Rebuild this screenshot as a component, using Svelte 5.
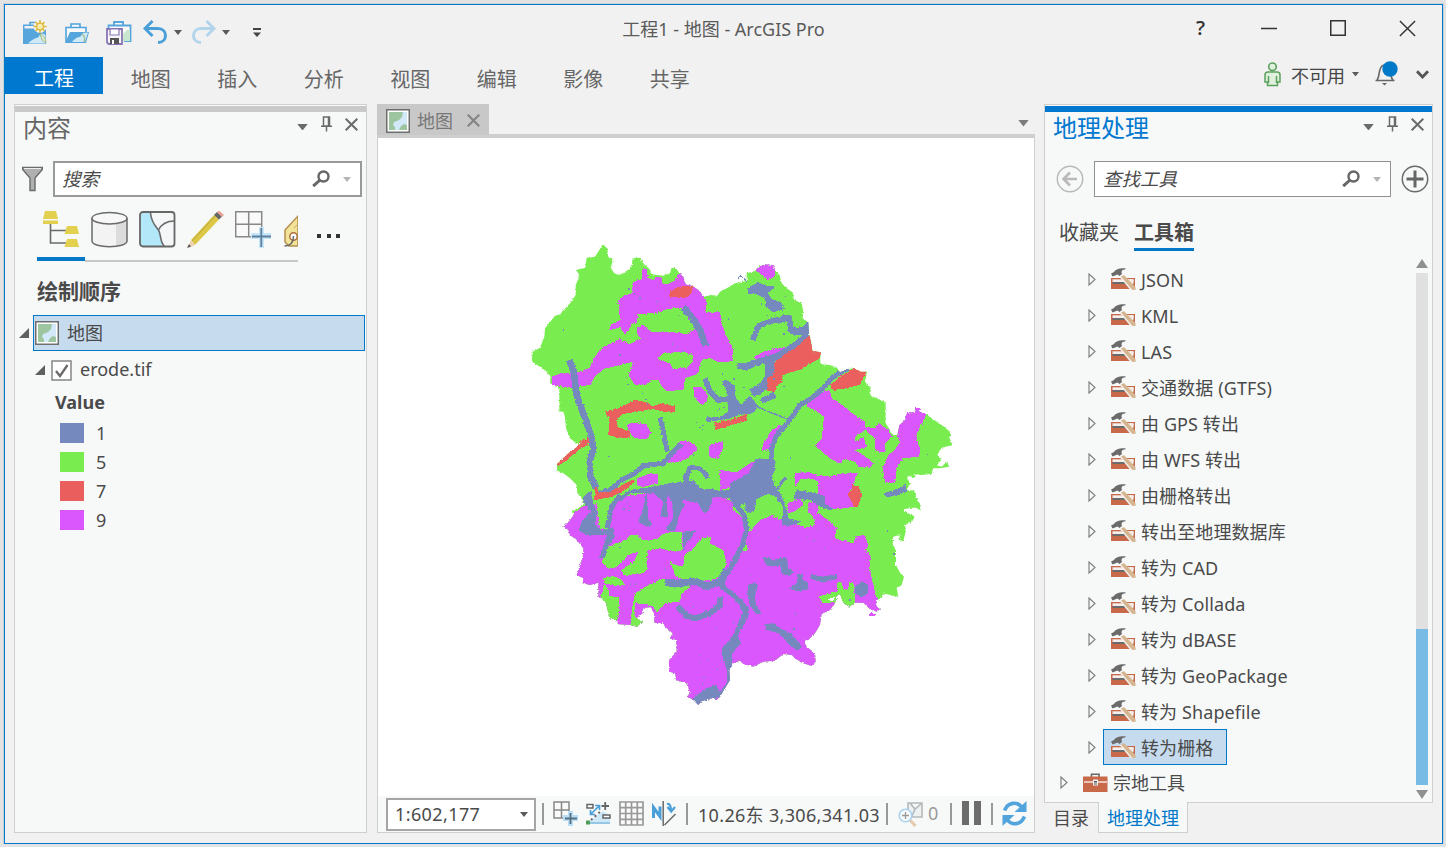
<script>
  const ribbon = ['地图', '插入', '分析', '视图', '编辑', '影像', '共享'];
  const legend = [
    ['1', '#7689bf'],
    ['5', '#79ec50'],
    ['7', '#eb5e5e'],
    ['9', '#da57fd']
  ];
  const tools = [
    'JSON', 'KML', 'LAS', '交通数据 (GTFS)', '由 GPS 转出', '由 WFS 转出', '由栅格转出',
    '转出至地理数据库', '转为 CAD', '转为 Collada', '转为 dBASE', '转为 GeoPackage',
    '转为 Shapefile', '转为栅格'
  ];

  // Study-area outline, in thirds of a pixel
  const outline =
    '248,28 262,40 265,65 280,72 272,98 283,115 300,119 320,108 335,95 338,70 362,68 366,80 390,105 395,118 430,122 450,115 455,98 468,100 478,115 490,125 497,148 518,153 535,165 552,185 570,180 592,182 600,170 620,160 645,145 680,138 680,115 705,108 715,95 735,88 758,90 766,108 778,118 785,145 800,160 818,172 822,195 845,205 850,230 848,250 865,262 868,300 873,318 878,348 903,352 900,375 905,388 930,390 952,400 960,412 980,402 1005,400 1022,410 1042,410 1035,435 1040,450 1052,455 1052,482 1075,492 1097,502 1097,565 1110,585 1118,600 1132,600 1138,570 1155,555 1160,535 1185,530 1188,522 1200,530 1220,538 1250,560 1272,575 1290,590 1290,615 1298,630 1265,638 1252,660 1265,672 1252,690 1265,695 1280,680 1288,695 1260,700 1240,700 1235,717 1205,720 1180,717 1190,728 1160,722 1170,747 1160,765 1182,767 1190,790 1202,810 1200,825 1185,817 1150,823 1165,835 1183,843 1178,857 1155,870 1158,887 1150,917 1140,920 1138,900 1120,905 1118,927 1128,945 1128,990 1140,1013 1152,1025 1145,1050 1130,1060 1135,1085 1110,1080 1090,1075 1085,1090 1070,1095 1068,1110 1080,1123 1070,1130 1050,1123 1030,1103 1005,1103 988,1115 970,1103 960,1077 950,1083 945,1105 930,1125 905,1137 900,1170 885,1195 865,1215 852,1217 860,1235 885,1255 887,1280 875,1293 845,1283 825,1270 815,1260 790,1257 765,1277 730,1280 700,1295 670,1287 660,1277 640,1285 628,1305 630,1335 615,1360 600,1385 590,1395 580,1388 560,1395 545,1398 535,1410 520,1395 503,1385 510,1370 498,1345 468,1335 465,1315 447,1310 447,1275 470,1250 468,1215 450,1210 458,1195 435,1175 430,1165 403,1163 402,1135 393,1117 370,1119 368,1135 350,1150 368,1160 350,1175 330,1170 295,1168 288,1155 268,1150 258,1105 245,1090 235,1085 235,1043 210,1050 188,1045 190,1030 170,1020 178,995 188,970 190,940 170,915 150,900 145,885 130,875 150,855 165,835 155,830 190,810 185,790 172,775 170,750 150,730 130,715 112,707 110,688 145,655 172,635 188,618 172,628 150,610 138,580 133,530 118,530 118,460 90,445 92,425 75,405 60,395 35,380 38,350 60,338 73,305 75,280 105,242 120,238 150,205 167,180 167,150 180,122 168,105 195,98 200,68 225,65 238,45';

  // [x offset, y offset, points]
  const magenta = [
    [0, 0, '365,102 380,102 385,130 400,135 412,125 425,130 428,148 455,145 470,130 478,110 500,110 540,165 555,190 560,205 558,230 600,230 605,265 620,305 638,340 638,378 600,383 570,370 550,372 540,385 535,415 495,430 490,465 440,468 425,455 415,435 395,435 375,450 345,450 325,420 340,380 300,390 250,402 225,425 210,450 150,458 95,450 95,425 130,413 175,412 210,398 220,370 250,335 300,312 330,328 362,310 350,295 350,278 370,270 395,292 450,290 505,298 525,280 505,250 485,218 440,222 420,232 355,238 350,262 335,265 325,285 315,298 300,278 268,285 270,270 300,255 295,200 310,183 335,175 340,140 365,132'],
    [0, 0, '520,455 545,455 565,485 560,500 542,508 522,485'],
    [0, 0, '320,570 335,563 380,567 393,595 380,612 345,610 335,600'],
    [0, 0, '445,660 480,618 510,620 535,640 520,655 490,678 445,683'],
    [0, 0, '568,630 610,618 610,640 595,668 568,670'],
    [0, 0, '600,705 650,712 690,685 720,672 725,685 690,740 650,755 600,765'],
    [660, 0, '45,105 60,95 85,80 110,95 103,125 85,135 60,115'],
    [660, 0, '45,365 70,350 110,340 135,337 120,365 80,372 45,375'],
    [660, 0, '200,505 250,470 270,465 275,490 300,505 345,540 375,560 375,575 405,580 415,565 445,585 455,605 435,625 437,652 405,648 405,610 375,585 345,605 345,620 370,605 375,625 385,635 345,645 370,660 400,685 390,698 355,695 345,680 315,672 300,685 270,670 225,632 245,610 252,545 225,525 200,515'],
    [660, 0, '470,600 478,570 495,555 500,520 540,515 560,540 535,585 530,610 540,640 538,665 490,670 470,695 465,745 435,740 428,700 445,660 465,645 480,620'],
    [660, 0, '70,625 95,585 120,570 125,575 105,605 90,640 65,648'],
    [0, 705, '350,25 390,10 415,12 415,40 370,52 350,45'],
    [660, 705, '165,10 200,5 235,15 270,20 300,12 355,8 345,25 340,50 325,70 345,110 290,118 255,110 235,70 235,35 220,28 180,28 165,50'],
    [660, 705, '145,100 180,85 190,105 160,125 145,130'],
    [660, 705, '205,95 232,100 235,130 225,150 205,125'],
    [0, 705, '90,185 190,108 230,100 240,175 265,185 275,125 300,80 380,70 480,65 540,85 600,80 640,95 690,185 720,150 755,138 790,150 820,160 860,172 885,165 870,140 865,95 895,95 895,130 930,155 950,175 945,205 1000,220 1010,198 1032,195 1045,225 1038,240 1053,260 1048,295 1060,345 1068,380 1110,440 900,720 400,720 230,470 160,350']
  ];
  const green = [
    [0, 0, '412,370 430,355 490,350 518,360 518,380 500,398 460,402 450,385 420,375'],
    [0, 705, '250,265 262,230 320,210 330,195 350,195 370,210 410,208 435,188 485,185 485,242 455,243 420,235 385,240 380,275 382,300 360,312 310,315 305,300 345,270 355,245 325,255 305,275 290,292 262,295 245,275'],
    [0, 705, '450,272 465,285 490,290 492,255 515,240 545,205 575,200 568,220 610,240 620,280 605,315 575,330 500,332 465,318'],
    [0, 705, '250,325 280,317 305,330 315,345 290,348 252,340'],
    [0, 705, '240,390 252,345 265,355 268,378 298,382 295,445 288,455 260,450'],
    [0, 705, '333,475 335,420 345,370 385,345 430,325 450,345 512,350 485,370 480,395 435,400 410,428 395,405 345,400 345,440 370,455 350,475'],
    [660, 705, '235,380 290,365 292,335 305,340 312,360 325,355 328,337 342,340 345,398 328,415 300,405 285,400 250,398'],
    [660, 705, '-20,90 20,75 35,90 30,115 45,120 50,80 95,75 125,105 125,145 95,138 60,150 30,180 18,170 5,140 -20,120'],
    [660, 705, '160,125 190,105 205,125 225,150 220,165 195,170 170,155'],
    [0, 705, '665,240 678,212 682,245'],
    [0, 705, '540,20 560,30 600,0 600,55 560,55 520,45']
  ];
  const blue = [
    [0, 705, '290,85 330,60 400,50 450,40 495,35 520,30 540,55 600,60 655,57 690,40 690,95 640,110 630,85 580,80 565,125 550,130 535,100 490,90 475,135 465,185 435,180 460,145 455,95 440,67 440,110 445,140 420,142 430,95 400,70 380,72 385,145 400,165 380,170 355,155 370,115 378,70 330,70 300,95'],
    [0, 705, '215,60 220,100 232,130 225,165 245,180 280,172 285,200 265,230 255,265 235,265 250,230 262,195 200,195 175,180 185,155 212,125 190,95 190,80'],
    [660, 705, '-30,40 25,10 45,-30 60,-35 105,-30 105,0 95,20 105,50 125,75 140,120 145,145 185,155 150,168 125,165 130,110 105,80 85,72 50,85 45,120 30,130 15,120 15,90 -30,90'],
    [660, 0, '25,160 55,140 70,150 105,155 85,175 95,195 120,198 135,222 100,232 80,220 75,190 50,178 25,178'],
    [660, 0, '120,242 155,240 160,275 190,275 200,260 215,265 206,298 160,300 145,290 140,262'],
    [660, 0, '0,515 30,480 40,495 57,515 35,535 0,540'],
    [0, 0, '605,440 620,435 645,455 645,485 668,515 690,500 690,530 660,540 630,550 560,562 558,545 600,545 625,530 625,480'],
    [660, 705, '160,85 170,60 220,68 255,78 258,105 280,115 275,122 240,110 215,92'],
    [660, 705, '432,70 480,53 495,42 502,65 470,77 435,82'],
    [660, 705, '68,262 85,262 100,270 125,263 140,262 145,295 160,305 150,318 125,312 122,287 80,287'],
    [660, 705, '212,312 250,320 292,313 292,327 250,337 212,327'],
    [660, 705, '170,312 190,312 190,332 205,337 205,360 165,363 148,355 170,340'],
    [660, 705, '345,350 365,332 385,345 385,370 365,382 345,370'],
    [660, 705, '25,345 40,337 55,345 44,375 50,408 65,430 50,432 30,410 22,370'],
    [660, 705, '75,465 100,458 122,475 152,490 187,530 175,542 150,527 120,492 80,480'],
    [0, 705, '655,500 662,520 637,550 637,590 620,597 605,555 608,530 630,508'],
    [0, 705, '530,675 560,655 590,645 600,670 585,690 545,698 535,708 515,690'],
    [0, 705, '488,185 525,182 515,205 500,215 490,240']
  ];
  // [width, x offset, y offset, points]
  const rivers = [
    [20, 0, 0, '148,375 162,415 170,480 195,550 212,600 220,640 210,680 210,720 228,760'],
    [15, 0, 0, '235,775 270,765 305,735 345,715 370,692 430,685 450,660 485,627'],
    [15, 0, 0, '420,548 430,590 442,650'],
    [15, 0, 705, '300,75 275,110 262,175'],
    [20, 0, 0, '490,218 515,245 540,285 557,332'],
    [14, 0, 0, '500,725 510,697 540,700 560,722 563,730'],
    [18, 0, 0, '500,715 497,755'],
    [16, 0, 0, '555,430 570,470 595,495 640,490'],
    [15, 660, 0, '325,400 280,425 250,460 215,490 180,510 150,555 110,600 95,640 95,690'],
    [4, 660, 0, '0,510 50,515 110,540 150,555'],
    [17, 660, 0, '38,315 55,275 90,258 120,255 145,250'],
    [20, 660, 0, '205,300 160,335 110,365 50,382 20,394 -10,393'],
    [28, 660, 0, '90,370 88,430 70,455 35,475'],
    [18, 660, 0, '65,498 105,480'],
    [15, 0, 705, '640,95 672,135 680,180 665,230 635,290 610,325 605,350 640,375 680,415 650,490 620,540 630,595 628,640 595,685'],
    [22, 0, 705, '435,338 470,340 530,335 560,350 600,335 620,300'],
    [18, 0, 705, '472,408 500,438 525,445 570,430 600,405 600,380'],
    [16, 660, 705, '0,390 18,430 0,475'],
    [9, 660, 705, '110,60 130,30 140,25'],
    [14, 0, 705, '460,175 470,135 490,100']
  ];
  const red = [
    [0, 0, '450,170 475,155 520,153 515,175 498,188 447,187'],
    [0, 0, '252,530 300,518 345,494 380,503 400,513 430,505 466,515 466,532 430,530 400,522 350,530 305,538 290,555 290,575 330,590 330,608 300,610 265,600 268,550'],
    [0, 0, '582,563 625,556 680,538 680,557 640,569 585,585'],
    [0, 0, '108,686 145,650 190,612 207,610 205,630 180,642 150,667 115,694'],
    [0, 705, '228,48 235,65 270,65 340,28 345,35 315,60 270,82 222,90'],
    [660, 0, '210,297 213,318 218,348 245,350 238,372 210,385 190,400 130,420 125,440 108,455 105,470 82,468 80,430 100,420 103,385 130,360 165,340 195,315'],
    [660, 0, '272,450 300,425 345,398 385,405 358,450 310,462 272,465'],
    [660, 705, '322,72 335,60 335,46 355,48 367,75 354,112 342,112 330,85']
  ];
  // Single-cell speckles of class 1
  const specks = [
    [128,283],[342,175],[358,187],[325,160],[410,199],[474,240],[298,358],[318,425],[322,447],[366,474],[376,492],[380,505],[455,325],[470,335],[487,347],[623,250],[575,297],[606,415],[640,430],[596,520],[610,515],[590,525],[545,582],[538,575],[547,570],[528,560],[722,205],[740,240],[765,240],[790,295],[795,182],[760,430],[670,455],[790,452],[810,667],[1220,657],[1112,680],[890,882],[860,905],[880,915],[912,938],[775,905],[825,1135],[820,1180],[750,1265],[690,1020],[1100,886],[1120,955],[988,1093],[540,1280],[560,1275],[590,1300],[550,1325],[545,1345],[585,1175],[640,1160],[517,1113],[298,935],[320,800],[328,812],[310,820],[325,825],[345,1045],[330,1045],[265,663],[518,658],[435,1000],[540,1260],[600,1275]
  ];
</script>

{#snippet caret(c = '#5a5a5a', w = 8)}
  <svg width={w} height={w / 2 + 1} viewBox="0 0 8 5"><path d="M0 0h8L4 5z" fill={c} /></svg>
{/snippet}
{#snippet cross(s = 13, w = 2, c = '#6a6a6a')}
  <svg width={s} height={s} viewBox="0 0 13 13"><path d="M.7.7l11.6 11.6M12.3.7L.7 12.3" stroke={c} stroke-width={w} /></svg>
{/snippet}
{#snippet pin()}
  <svg width="11" height="16" viewBox="0 0 11 16"><path d="M2.500 1h6v9h-6zM0 10.200h11M5.500 10v5.500M7.500 1v9" fill="none" stroke="#6a6a6a" stroke-width="1.500" /></svg>
{/snippet}
{#snippet lens()}
  <svg width="18" height="18" viewBox="0 0 18 18"><circle cx="11.500" cy="6.500" r="5" fill="none" stroke="#666" stroke-width="2.400" /><path d="M8 10L1.200 16.200" stroke="#666" stroke-width="3" /></svg>
{/snippet}
{#snippet mapIcon()}
  <svg width="24" height="24" viewBox="0 0 24 24"><rect x=".75" y=".75" width="22.500" height="22.500" fill="#fff" stroke="#6e6e6e" stroke-width="1.500" /><path d="M3 3h18v18H3z" fill="#9cc5a0" /><path d="M17 3h4v13l-3-1-3 2-2 4H9v-3l-2-2 1-3 3-1 2-1 3-3z" fill="#d3e8f8" /></svg>
{/snippet}
{#snippet toolset()}
  <svg width="25" height="23" viewBox="0 0 25 23"><path d="M0 10h24v11H0z" fill="#c8694a" /><path d="M1.500 11.300h21v2.700h-21z" fill="#f4efec" /><path d="M1.500 14h21v2h-21z" fill="#6b6b6b" /><path d="M16 11.300h6.500v4.700H18z" fill="#f4efec" /><path d="M8.500 9h3L23 21.500h-4z" fill="#f4efec" /><path d="M10 8.500l3-1.500L24.500 19v3h-3z" fill="#d6b690" /><path d="M0 5.500l3-1.500C5 1.200 8 0 14.500.3v1c-3.200.4-4 1.500-4 3.200l.5 1.500-2.500 2L6.500 6.500 1.500 8.500z" fill="#6b6b6b" /></svg>
{/snippet}
{#snippet expander()}
  <svg width="8" height="13" viewBox="0 0 8 13"><path d="M1 1v11l6-5.500z" fill="none" stroke="#808080" stroke-width="1.200" /></svg>
{/snippet}
{#snippet opened()}
  <svg width="10" height="10" viewBox="0 0 10 10"><path d="M10 0v10H0z" fill="#5f5f5f" /></svg>
{/snippet}
{#snippet shapes(list, fill)}
  {#each list as [x, y, points]}
    <polygon {points} {fill} transform="translate({x} {y})" />
  {/each}
{/snippet}

<div class="window">
  <header class="title">
    <div class="quick">
      <svg width="26" height="26" viewBox="0 0 26 26"><path d="M8 5V2.500h7V5" fill="none" stroke="#4fa3dc" stroke-width="1.500" /><path d="M1 4.500h23V24H1z" fill="#56a5dc" /><path d="M2.500 6h10v2.500h-10z" fill="#f1f1f1" /><path d="M6 23.500q5-5 10-6l3-4q4 0 4.500 2v8z" fill="#cfe9f7" /><path d="M18 14q6 2 6 9l-4-3z" fill="#d9e9c8" stroke="#a3bd96" /><circle cx="18" cy="6.500" r="6.500" fill="#f3f3ef" /><path d="M18 0v13M11.500 6.500h13M13.500 2l9 9M22.500 2l-9 9" stroke="#dcb83c" stroke-width="1.600" /><circle cx="18" cy="6.500" r="3.400" fill="#f7edb0" stroke="#dcb83c" stroke-width="1.300" /></svg>
      <svg width="26" height="26" viewBox="0 0 26 26"><path d="M7 7V4h9v3M2 22V7.500h20V12" fill="#fafafa" stroke="#4fa3dc" stroke-width="1.600" /><path d="M1 23l5-11h19l-3 11z" fill="#56a5dc" /><path d="M8 22q4-5 8-5l3-4 5-.5-3 9.500z" fill="#cfe9f7" /><path d="M18 14q4 3 2 8" fill="none" stroke="#a3bd96" stroke-width="1.500" /></svg>
      <svg width="26" height="26" viewBox="0 0 26 26"><path d="M8 5V2h9v3M2.500 10V5.500h22V21H18" fill="#fafafa" stroke="#56a5dc" stroke-width="1.800" /><path d="M17 21V14l4-4h3v11z" fill="#c9e6cf" /><path d="M1 9h15v15H2.500L1 22.500z" fill="#f7f7fa" stroke="#8a76b5" stroke-width="1.800" /><path d="M4 9h9v6H4z" fill="#fff" stroke="#8a76b5" stroke-width="1.200" /><path d="M4 18h9v6H4z" fill="#555" /><path d="M6 20h2v4H6z" fill="#fff" /></svg>
      <svg class="undo" width="25" height="25" viewBox="0 0 25 25"><path d="M2 8.500h13c10 0 10 14 0 14M9.500 1L2 8.500 9.500 16" fill="none" stroke="#4a9fd9" stroke-width="3" /></svg>
      {@render caret()}
      <svg class="redo" width="25" height="25" viewBox="0 0 25 25"><path d="M23 8.500H10c-10 0-10 14 0 14M15.500 1L23 8.500 15.500 16" fill="none" stroke="#b3d5ec" stroke-width="3" /></svg>
      {@render caret()}
      <svg class="custom" width="8" height="10" viewBox="0 0 8 10"><path d="M0 0h8v2H0zM0 4.500h8L4 9z" fill="#444" /></svg>
    </div>
    <div class="caption">工程1 - 地图 - ArcGIS Pro</div>
    <div class="sys">
      <b>?</b>
      <svg width="16" height="16"><path d="M0 8.500h16" stroke="#333" stroke-width="1.500" /></svg>
      <svg width="16" height="16"><path d="M.75.75h14.500v14.500H.75z" fill="none" stroke="#333" stroke-width="1.500" /></svg>
      {@render cross(17, 1.1, '#333')}
    </div>
  </header>

  <nav class="ribbon">
    <div class="file">工程</div>
    {#each ribbon as t}<div class="rtab">{t}</div>{/each}
    <div class="account">
      <svg width="17" height="25" viewBox="0 0 17 25"><circle cx="8.500" cy="4.800" r="3.800" fill="#dff0dc" stroke="#5ba05c" stroke-width="1.600" /><path d="M4 10h9q3 0 3 3v7h-2.500v3.500h-10V20H1v-7q0-3 3-3zM4.500 14v7M12.500 14v7" fill="#dff0dc" stroke="#5ba05c" stroke-width="1.500" /></svg>
      <span>不可用</span>
      {@render caret('#5a5a5a', 7)}
      <svg class="bell" width="25" height="25" viewBox="0 0 25 25"><path d="M1.500 19.500h19M3 19c3-3 1-10 5-14 1-1 2-1 3-1M19 19c-2-2-1.500-3-2-5" fill="none" stroke="#666" stroke-width="1.600" /><path d="M8 22h5l-2.500 2.500z" fill="#666" /><circle cx="16" cy="8" r="7.700" fill="#0079c8" /></svg>
      <svg width="13" height="9" viewBox="0 0 13 9"><path d="M1 1.200L6.500 7 12 1.200" fill="none" stroke="#555" stroke-width="2.800" /></svg>
    </div>
  </nav>

  <main class="dock">
    <section class="panel contents">
      <div class="strip"></div>
      <div class="phead"><h2>内容</h2>{@render caret('#6a6a6a', 11)}{@render pin()}{@render cross()}</div>
      <div class="searchrow">
        <svg width="21" height="26" viewBox="0 0 21 26"><path d="M.7 1.500h19.600v2L13 12v12.500H8V12L.7 3.500z" fill="#b0b0b0" stroke="#6a6a6a" stroke-width="1.400" /><path d="M2 2.500h17" stroke="#eee" /></svg>
        <div class="search"><i>搜索</i>{@render lens()}{@render caret('#b5b5b5')}</div>
      </div>
      <div class="views">
        <svg width="37" height="37" viewBox="0 0 37 37"><path d="M7.500 12v20h16M7.500 19.500h16" fill="none" stroke="#6a6a6a" stroke-width="1.600" /><path d="M2 0h11l2 8H0zM0 9.500h15V13H0zM24 15h10l2 8H21.500zM24 28h10l2 8H21.500z" fill="#e3d04e" /></svg>
        <svg width="37" height="37" viewBox="0 0 37 37"><path d="M1 7v23c0 8 35 8 35 0V7" fill="#f3f3f3" /><path d="M25 12l11-5v23q-2 4-11 5z" fill="#dcdcdc" /><path d="M1 7v23c0 7.500 35 7.500 35 0V7" fill="none" stroke="#6a6a6a" stroke-width="1.500" /><ellipse cx="18.500" cy="7.200" rx="17.500" ry="5.800" fill="#f7f7f7" stroke="#6a6a6a" stroke-width="1.500" /></svg>
        <svg width="37" height="37" viewBox="0 0 37 37"><rect x="1" y="1" width="34.500" height="34.500" rx="3" fill="#f5f6f7" /><path d="M1.500 1.500h10c1 10 5 13 8 17 3 5 1 12 6 17h-24z" fill="#b3e8f8" /><path d="M11.500 2c1 10 5 13 8 17 3 5 1 12 6 16.500M19.500 19c3-6 9-9 16-9" fill="none" stroke="#6a6a6a" stroke-width="1.600" /><rect x="1" y="1" width="34.500" height="34.500" rx="3" fill="none" stroke="#666" stroke-width="1.800" /></svg>
        <svg width="37" height="37" viewBox="0 0 37 37"><path d="M4 29L27 4l5 4.500L8 34z" fill="#dcc846" /><path d="M5 30L28 5" stroke="#b7a543" stroke-width="1" /><path d="M4 29l4 5-7 3z" fill="#efcfae" /><path d="M2 33l2 2.500L0 37z" fill="#555" /><path d="M27 4l3-3 5 4.500-3 3z" fill="#666" /><path d="M30 1l2-1.500 5 4.500-2 2z" fill="#e8a396" /></svg>
        <svg width="37" height="37" viewBox="0 0 37 37"><path d="M.7.700h26v25H.7zM13.700 1v25M.7 13.200h26" fill="#fafafa" stroke="#888" stroke-width="1.500" /><path d="M16 22h8v-6h5v6h7v6h-7v9h-5v-9h-8z" fill="#c6e6fa" /><path d="M26.300 17v19M17 25.500h19" stroke="#5d7f99" stroke-width="1.800" /></svg>
        <svg class="label" width="14" height="37" viewBox="0 0 14 37"><path d="M1 19L14 5v30H5l-4-4z" fill="#f1e397" stroke="#b68f50" stroke-width="1.500" /><path d="M10 17l4-4" stroke="#c9a36a" /><circle cx="9.500" cy="25.500" r="3.700" fill="#fff" stroke="#b0703c" stroke-width="1.500" /><path d="M9.500 25q0 10-9 10" fill="none" stroke="#666" stroke-width="1.400" /></svg>
        <div class="dots"><s></s><s></s><s></s></div>
      </div>
      <div class="underline"></div>
      <h3>绘制顺序</h3>
      <div class="maprow">{@render opened()}<div class="sel">{@render mapIcon()}<span>地图</span></div></div>
      <div class="layer">
        {@render opened()}
        <svg width="21" height="21" viewBox="0 0 21 21"><rect x="1" y="1" width="19" height="19" fill="#fff" stroke="#858585" stroke-width="1.500" /><path d="M5 11l4 5 7.500-11" fill="none" stroke="#6a6a6a" stroke-width="2.300" /></svg>
        <span>erode.tif</span>
      </div>
      <div class="value">Value</div>
      {#each legend as [n, c]}
        <div class="class"><s style:background={c}></s><span>{n}</span></div>
      {/each}
    </section>

    <section class="view">
      <div class="tabs"><div class="doc">{@render mapIcon()}<span>地图</span>{@render cross(13, 2.2, '#858585')}</div><div class="more">{@render caret('#7c7c7c', 11)}</div></div>
      <div class="canvas">
        <svg width="440" height="480" viewBox="0 0 1320 1440" shape-rendering="crispEdges">
          <defs>
            <clipPath id="area"><polygon points={outline} /></clipPath>
            <filter id="ragged" x="0" y="0" width="1" height="1">
              <feTurbulence type="fractalNoise" baseFrequency="0.2" numOctaves="2" seed="4" />
              <feDisplacementMap in="SourceGraphic" scale="9" xChannelSelector="R" yChannelSelector="G" />
            </filter>
          </defs>
          <g filter="url(#ragged)">
            <g clip-path="url(#area)">
              <rect width="1320" height="1440" fill="#79ec50" />
              {@render shapes(magenta, '#da57fd')}
              {@render shapes(green, '#79ec50')}
              {@render shapes(blue, '#7689bf')}
              {#each rivers as [w, x, y, points]}
                <polyline {points} fill="none" stroke="#7689bf" stroke-width={w} stroke-linejoin="round" transform="translate({x} {y})" />
              {/each}
              {@render shapes(red, '#eb5e5e')}
              <polygon points="922,1093 945,1085 940,1097 925,1099" fill="#fff" />
            </g>
            <polygon points="1048,1135 1068,1134 1066,1143 1048,1142" fill="#da57fd" />
            <polygon points="1185,520 1202,518 1200,528 1186,526" fill="#da57fd" />
          </g>
          {#each specks as [x, y]}<rect {x} {y} width="4" height="4" fill="#7689bf" />{/each}
          <path d="M656 133v-6l6-4 6 4M672 130l8 10" fill="none" stroke="#7689bf" stroke-width="3" />
        </svg>
      </div>
      <div class="status">
        <div class="scale"><span>1:602,177</span>{@render caret()}</div>
        <u class="bar b1"></u>
        <svg class="s1" width="25" height="25" viewBox="0 0 25 25"><path d="M1 1h15v16H1zM8.500 1v16M1 9h15" fill="#fafafa" stroke="#888" stroke-width="1.500" /><path d="M10 14h5v-4h5v4h5v6h-5v5h-5v-5h-5z" fill="#b9def8" /><path d="M17.500 12v11M12 17.500h12" stroke="#56707f" stroke-width="1.800" /></svg>
        <svg class="s2" width="25" height="25" viewBox="0 0 25 25"><path d="M1 22L17 10l7 5v8H1z" fill="#cfe8f8" /><path d="M1 3.500h6V7H1zM17 14h7v3h-7z" fill="#fff" stroke="#666" stroke-width="1.500" /><path d="M15.500 5H23M19.200 1v8" stroke="#666" stroke-width="1.800" /><path d="M5 13l8-8M9 4.500h4.500V9M4.500 9v4.500H9" fill="none" stroke="#4a9fd9" stroke-width="1.700" /><path d="M5 19l11-10" stroke="#666" stroke-width="2" stroke-dasharray="2 3" /><path d="M3 22h21" stroke="#84bce2" stroke-width="1.500" /><path d="M0 19.500h4v4H0z" fill="#4e9e57" /></svg>
        <svg class="s3" width="25" height="25" viewBox="0 0 25 25"><path d="M1 1h23v23H1zM6.700 1v23M12.500 1v23M18.300 1v23M1 6.700h23M1 12.500h23M1 18.300h23" fill="#fafafa" stroke="#999" stroke-width="1.700" /></svg>
        <svg class="s4" width="25" height="25" viewBox="0 0 25 25"><path d="M1.500 17V6.500L8 15.500V5.500" fill="none" stroke="#4a9fd9" stroke-width="3" /><path d="M11.200 0v25M23.500 13L12.500 24" stroke="#6a6a6a" stroke-width="1.500" /><path d="M15 3q4-1 4 7M15.500 6l3.700 4.500L23 6" fill="none" stroke="#4a9fd9" stroke-width="2.200" /></svg>
        <u class="bar b2"></u>
        <span class="coords">10.26东 3,306,341.03</span>
        <u class="bar b3"></u>
        <svg class="s5" width="25" height="25" viewBox="0 0 25 25"><path d="M10 1h14v14H10zM12 1l5 6 6-5M17 7l-3 7" fill="#edf1f2" stroke="#b4b8ba" stroke-width="1.600" /><path d="M12 18l5.500 6" stroke="#e5c9ac" stroke-width="3" /><circle cx="7.500" cy="13.500" r="6.300" fill="#f6fafc" stroke="#a9d2ee" stroke-width="1.600" /><path d="M4 13.500h7M7.500 10v7" stroke="#999" stroke-width="1.300" /></svg>
        <span class="zero">0</span>
        <u class="bar b4"></u>
        <svg class="pause" width="19" height="24"><path d="M0 0h7v24H0zM12 0h7v24h-7z" fill="#6c6c6c" /></svg>
        <u class="bar b5"></u>
        <svg width="25" height="25" viewBox="0 0 25 25"><path d="M2.500 9.500C6 1 15 0 20 6.500M22.500 15.500C19 24 10 25 5 18.500" fill="none" stroke="#52a5dc" stroke-width="3.600" /><path d="M24.500 0v11h-12zM.5 25V14h12z" fill="#52a5dc" /></svg>
      </div>
    </section>

    <div class="rightcol">
      <section class="panel geo">
        <div class="strip"></div>
        <div class="phead"><h2>地理处理</h2>{@render caret('#6a6a6a', 11)}{@render pin()}{@render cross()}</div>
        <div class="searchrow">
          <svg width="28" height="28" viewBox="0 0 28 28"><circle cx="14" cy="14" r="12.700" fill="none" stroke="#b9b9b9" stroke-width="1.500" /><path d="M7.500 14H21M14 7.500L7.500 14l6.500 6.500" fill="none" stroke="#b9b9b9" stroke-width="2.600" /></svg>
          <div class="search"><i>查找工具</i>{@render lens()}{@render caret('#b5b5b5')}</div>
          <svg width="28" height="28" viewBox="0 0 28 28"><circle cx="14" cy="14" r="12.700" fill="none" stroke="#6a6a6a" stroke-width="1.500" /><path d="M5.500 14h17M14 5.500v17" stroke="#666" stroke-width="3" /></svg>
        </div>
        <div class="gtabs"><span>收藏夹</span><b>工具箱</b></div>
        <div class="body">
          <div class="list">
            {#each tools as t, i}
              <div class="tool">{@render expander()}<div class="item" class:on={i === tools.length - 1}>{@render toolset()}<span>{t}</span></div></div>
            {/each}
            <div class="tool root">{@render expander()}<svg class="box" width="25" height="19" viewBox="0 0 25 19"><path d="M8.500 4V1.200h7.500V4" fill="none" stroke="#666" stroke-width="1.600" /><path d="M0 3.500h24.500V19H0z" fill="#c8694a" /><path d="M1 9h23" stroke="#f3e7e2" stroke-width="1.500" /><path d="M10 6.500h5v6h-5z" fill="#f3f3f3" /><path d="M11 8h3v1.500h-3zM11 10.500h3v1h-3z" fill="#555" /></svg><span>宗地工具</span></div>
          </div>
          <div class="scroll">
            <svg width="12" height="9"><path d="M6 0l6 9H0z" fill="#909090" /></svg>
            <div class="track"><div class="thumb"></div></div>
            <svg width="12" height="9"><path d="M0 0h12L6 9z" fill="#909090" /></svg>
          </div>
        </div>
      </section>
      <div class="btabs"><span>目录</span><b>地理处理</b></div>
    </div>
  </main>
</div>

<style>
  :global(body) { background: #e3e3e3; overflow: hidden; }
  .window {
    box-sizing: border-box; width: 1439px; height: 840px; margin: 4px 0 0 4px;
    border: 1px solid #0078c8; background: #f1f1f1; box-shadow: 0 0 0 1px #c5d3dc;
    font: 18px/24px "Noto Sans", "Noto Sans CJK SC", sans-serif; color: #4a4a4a;
    display: flex; flex-direction: column;
  }
  svg { display: block; flex: none; }
  h2, h3 { margin: 0; font-weight: 400; }
  s, u { text-decoration: none; display: block; flex: none; }
  span, i, b, h2, h3 { white-space: nowrap; }

  .title { height: 52px; flex: none; display: grid; grid-template-columns: 1fr auto 1fr; align-items: center; }
  .quick { display: flex; align-items: center; padding-left: 17px; gap: 16px; margin-top: 3px; }
  .undo { margin-left: -5px; }
  .quick .undo + :global(svg) { margin-left: -10px; }
  .redo { margin-left: -7px; }
  .quick .redo + :global(svg) { margin-left: -10px; }
  .custom { margin-left: 7px; }
  .caption { font-size: 18px; color: #5a5a5a; margin-top: -4px; }
  .sys { display: flex; align-items: center; justify-content: flex-end; padding-right: 26px; gap: 53px; margin-top: -6px; color: #333; }
  .sys b { font: 600 20px/24px "Open Sans"; width: 9px; margin-right: 3px; }

  .ribbon { height: 38px; flex: none; display: flex; font-size: 20px; color: #666; }
  .file { width: 98px; height: 37px; background: #0078d0; color: #fff; text-align: center; line-height: 43px; margin-right: 4.500px; }
  .rtab { width: 86.500px; text-align: center; line-height: 45px; }
  .account { margin-left: auto; display: flex; align-items: center; padding-right: 13px; font-size: 18px; color: #444; height: 34px; }
  .account span { margin: 0 7px 0 10px; line-height: 34px; padding-top: 3px; }
  .bell { margin: -1px 17px 0 15px; }

  .dock { flex: 1; display: grid; grid-template-columns: 353px 658px 388px; column-gap: 10px; padding: 9px 0 10px 9px; min-height: 0; }
  .panel { box-sizing: border-box; border: 1px solid #cfcfcf; background: #f7f9f9; min-height: 0; }
  .strip { height: 6px; margin-top: 1px; background: #c9c9c9; }
  .phead { display: flex; align-items: center; height: 34px; padding: 0 8px; color: #666; }
  .phead h2 { font-size: 24px; line-height: 32px; margin: -2px auto 0 0; }
  .phead > :global(svg) { margin: -10px 0 0 13px; }
  .phead > h2 + :global(svg) { margin-top: -4px; }
  .searchrow { display: flex; align-items: center; height: 36px; margin-top: 15px; padding: 0 4px 0 7px; }
  .search { box-sizing: border-box; flex: 1; height: 36px; border: 2px solid #999; background: #fff; display: flex; align-items: center; margin-left: 10px; padding: 0 9px 0 7px; gap: 13px; }
  .search i { margin-right: auto; color: #4a4a4a; font-size: 18.500px; line-height: 32px; }

  .views { display: flex; height: 37px; margin: 14px 0 0 28px; gap: 11px; }
  .label { margin-left: 1px; }
  .dots { display: flex; gap: 5.500px; margin: 23px 0 0 8px; }
  .dots s { width: 4px; height: 4px; background: #333; }
  .underline { margin: 9px 0 0 22px; width: 261px; height: 5px; background: linear-gradient(#0078c8, #0078c8) 0 0 / 48px 4px no-repeat, linear-gradient(#c8c8c8, #c8c8c8) 48px 3px / 213px 2px no-repeat; }
  h3 { font-size: 21px; font-weight: 700; line-height: 30px; margin: 14px 0 0 22px; }
  .maprow { display: flex; align-items: center; margin-top: 9px; padding-left: 4px; }
  .sel { box-sizing: border-box; margin-left: 4px; width: 332px; height: 36px; border: 1px solid #0078c8; background: #c6dbee; display: flex; align-items: center; padding-left: 1px; gap: 8px; line-height: 34px; }
  .layer { display: flex; align-items: center; height: 38px; padding-left: 20px; line-height: 36px; }
  .layer span { margin-top: -2px; }
  .layer :global(svg + svg) { margin: 0 8px 0 6px; }
  .value { font-weight: 700; line-height: 26px; height: 29.500px; margin-left: 40px; }
  .class { display: flex; align-items: center; height: 29px; padding-left: 45px; gap: 12px; }
  .class s { width: 24px; height: 20px; }

  .view { display: flex; flex-direction: column; min-height: 0; }
  .tabs { display: flex; justify-content: space-between; height: 30px; border-bottom: 4px solid #cfcfcf; }
  .doc { width: 112px; box-sizing: border-box; height: 31px; background: #c8c8c8; display: flex; align-items: center; padding: 2px 0 0 9px; color: #777; line-height: 32px; }
  .doc span { margin: 0 14px 0 7px; }
  .more { padding: 16px 6px 0 0; }
  .canvas { flex: 1; background: #fff; border: 1px solid #cfcfcf; border-width: 0 1px; padding: 97px 0 0 142px; box-sizing: border-box; min-height: 0; }
  .status { box-sizing: border-box; height: 37px; border: 1px solid #cfcfcf; border-top: 0; background: #f7f9f9; display: flex; align-items: center; padding-left: 8px; }
  .scale { box-sizing: border-box; width: 150px; height: 33px; border: 2px solid #a5a5a5; background: #fff; display: flex; align-items: center; justify-content: space-between; padding: 0 6px 0 7px; line-height: 30px; }
  .scale span { letter-spacing: .4px; }
  .bar { width: 2px; height: 22px; background: #999; }
  .b1 { margin: 0 9px 0 6px; }
  .s1, .s2, .s3, .s4 { margin-top: -2px; }
  .s2, .s3, .s4 { margin-left: 8px; }
  .b2 { margin: 0 10px 0 9px; }
  .coords { width: 183px; letter-spacing: .32px; padding-top: 2px; }
  .b3 { margin: 0 10px 0 5px; }
  .zero { margin-left: 5px; width: 11px; color: #999; margin-top: -2px; }
  .b4 { margin: 0 10px 0 11px; }
  .pause, .b5 + svg { margin-top: -2px; }
  .b5 { margin: 0 9px 0 10px; }

  .rightcol { display: flex; flex-direction: column; min-height: 0; margin-left: -1px; width: 389px; }
  .geo { height: 699px; display: flex; flex-direction: column; }
  .geo .strip { background: #0078d0; flex: none; }
  .geo .phead { flex: none; }
  .geo h2 { color: #0078d0; }
  .geo .searchrow { padding: 0 3px 0 11px; flex: none; }
  .geo .search { margin: 0 10px; border-width: 1.500px; border-color: #909090; padding-left: 8px; }
  .gtabs { display: flex; gap: 15px; padding-left: 14px; margin-top: 20px; font-size: 20px; flex: none; }
  .gtabs span, .gtabs b { height: 31px; line-height: 32px; }
  .gtabs b { border-bottom: 3px solid #0078c8; }
  .body { display: flex; flex: 1; justify-content: space-between; min-height: 0; margin-top: -1px; }
  .list { padding-top: 11px; }
  .tool { display: flex; align-items: center; height: 36px; padding-left: 43px; }
  .tool span { padding-top: 1px; }
  .item { box-sizing: border-box; height: 36px; margin-left: 7px; border: 1px solid transparent; display: flex; align-items: center; padding: 0 13px 0 7px; gap: 5px; line-height: 34px; letter-spacing: .1px; }
  .on { border-color: #0078c8; background: #c6dbee; }
  .root { padding-left: 15px; height: 34px; }
  .box { margin: 0 5px 0 15px; }
  .scroll { display: flex; flex-direction: column; align-items: center; width: 12px; padding: 9px 4px 3px 0; gap: 5px; }
  .track { flex: 1; width: 12px; background: #e0e0e0; display: flex; align-items: flex-end; }
  .thumb { width: 12px; height: 156px; background: #78bce6; }
  .btabs { display: flex; height: 30px; padding-left: 9px; line-height: 30px; gap: 9px; }
  .btabs b { box-sizing: border-box; font-weight: 400; color: #0078c8; background: #f7f9f9; border: 1px solid #cfcfcf; border-top: 0; padding: 0 8px; height: 31px; margin-top: -1px; line-height: 32px; }
</style>
